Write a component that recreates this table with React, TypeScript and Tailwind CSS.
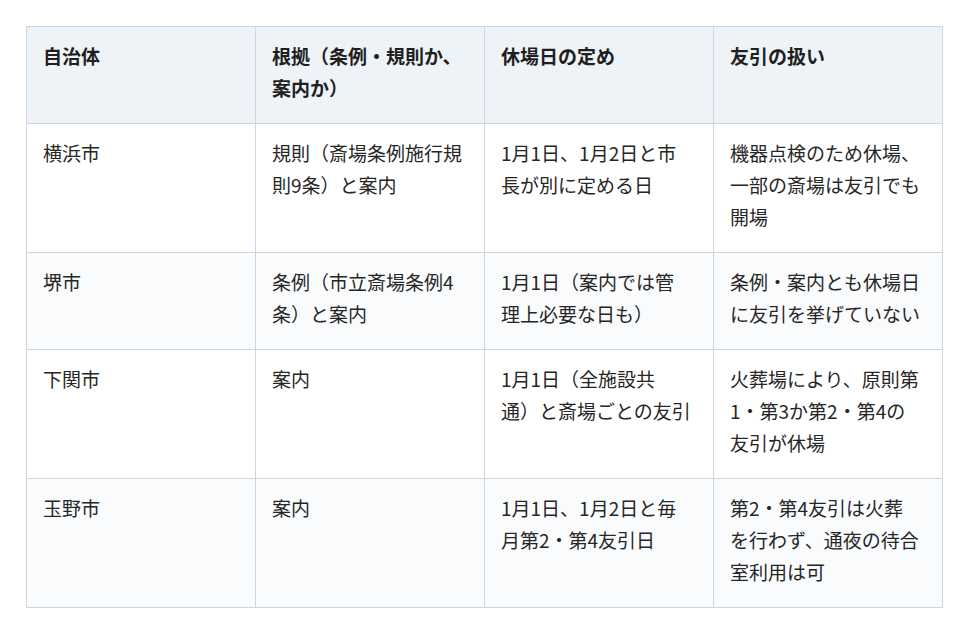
import React from "react";

const header: string[][] = [
  ["自治体"],
  ["根拠（条例・規則か、", "案内か）"],
  ["休場日の定め"],
  ["友引の扱い"],
];

const rows: string[][][] = [
  [
    ["横浜市"],
    ["規則（斎場条例施行規", "則9条）と案内"],
    ["1月1日、1月2日と市", "長が別に定める日"],
    ["機器点検のため休場、", "一部の斎場は友引でも", "開場"],
  ],
  [
    ["堺市"],
    ["条例（市立斎場条例4", "条）と案内"],
    ["1月1日（案内では管", "理上必要な日も）"],
    ["条例・案内とも休場日", "に友引を挙げていない"],
  ],
  [
    ["下関市"],
    ["案内"],
    ["1月1日（全施設共", "通）と斎場ごとの友引"],
    ["火葬場により、原則第", "1・第3か第2・第4の", "友引が休場"],
  ],
  [
    ["玉野市"],
    ["案内"],
    ["1月1日、1月2日と毎", "月第2・第4友引日"],
    ["第2・第4友引は火葬", "を行わず、通夜の待合", "室利用は可"],
  ],
];

function Lines({ lines }: { lines: string[] }) {
  return (
    <>
      {lines.map((l, i) => (
        <span key={i} className="block whitespace-nowrap">
          {l}
        </span>
      ))}
    </>
  );
}

export default function App() {
  return (
    <div
      className="w-[968px] h-[634px] bg-white pt-[26px] pl-[26px]"
      style={{ fontFamily: '"Noto Sans CJK JP", "Noto Sans", sans-serif' }}
    >
      <table className="w-[916px] table-fixed border-collapse text-[19px] leading-[32px] text-[#262626]">
        <colgroup>
          <col className="w-[229px]" />
          <col className="w-[229px]" />
          <col className="w-[229px]" />
          <col className="w-[229px]" />
        </colgroup>
        <thead>
          <tr className="bg-[#eef3f8]">
            {header.map((h, i) => (
              <th
                key={i}
                className="border border-[#cdd6e0] px-4 pt-[13px] pb-[19px] text-left align-top font-bold text-[#1f1f1f]"
              >
                <Lines lines={h} />
              </th>
            ))}
          </tr>
        </thead>
        <tbody>
          {rows.map((r, ri) => (
            <tr key={ri} className={ri % 2 === 1 ? "bg-[#f9fbfd]" : "bg-white"}>
              {r.map((c, ci) => (
                <td
                  key={ci}
                  className="border border-[#cdd6e0] px-4 pt-[13px] pb-[19px] align-top"
                >
                  <Lines lines={c} />
                </td>
              ))}
            </tr>
          ))}
        </tbody>
      </table>
    </div>
  );
}
